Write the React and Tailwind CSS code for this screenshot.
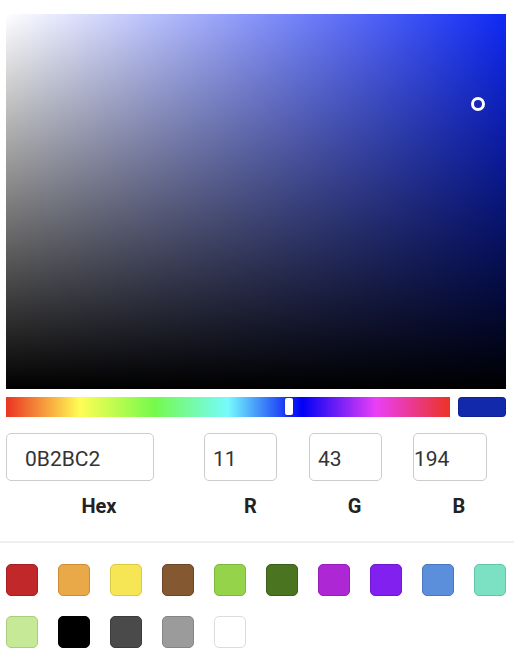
import React, { useState } from 'react';

const presetColors = [
  { fill: '#c0282a', edge: '#a51f22' },
  { fill: '#eaa948', edge: '#cf8e36' },
  { fill: '#f6e655', edge: '#dcca42' },
  { fill: '#845830', edge: '#6c4526' },
  { fill: '#94d34a', edge: '#7bb83b' },
  { fill: '#4b7420', edge: '#3b5f18' },
  { fill: '#ad27d4', edge: '#951eb9' },
  { fill: '#8220f0', edge: '#6e19d2' },
  { fill: '#5c8fdb', edge: '#4978c1' },
  { fill: '#7ce0c2', edge: '#63c6a8' },
  { fill: '#c5e996', edge: '#a9cd7c' },
  { fill: '#000000', edge: '#000000' },
  { fill: '#4a4a4a', edge: '#3b3b3b' },
  { fill: '#9b9b9b', edge: '#858585' },
  { fill: '#ffffff', edge: '#dcdcdc' },
];

function App() {
  const [color] = useState({ hex: '0B2BC2', r: 11, g: 43, b: 194 });

  return (
    <div className="w-[514px] min-h-[651px] bg-white font-['Roboto',sans-serif]">
      <div className="px-[6px] pt-[14px]">
        {/* Saturation / value area */}
        <div className="relative w-[500px] h-[375px] bg-[#0f29f5]">
          <div className="absolute inset-0 bg-[linear-gradient(to_right,#ffffff,rgba(255,255,255,0))]" />
          <div className="absolute inset-0 bg-[linear-gradient(to_top,#000000,rgba(0,0,0,0))]" />
          <div className="absolute left-[465px] top-[83px] w-[14px] h-[14px] rounded-full border-[3px] border-white shadow-[0_0_1px_rgba(0,0,0,0.4)]" />
        </div>

        {/* Hue slider + active colour */}
        <div className="flex gap-2 mt-2">
          <div className="relative w-[444px] h-5 bg-[linear-gradient(to_right,#eb3323_0%,#fffd54_16.67%,#75fa4c_33.33%,#75fbfd_50%,#0000f5_66.67%,#ea3ff7_83.33%,#eb3323_100%)]">
            <div className="absolute left-[279px] top-[1px] w-2 h-[17px] rounded-[2px] bg-white shadow-[0_0_2px_rgba(0,0,0,0.35)]" />
          </div>
          <div className="w-12 h-5 rounded-[4px] bg-[#1329ab] shadow-[inset_0_0_0_1px_rgba(0,0,0,0.15)]" />
        </div>

        {/* Fields */}
        <div className="flex mt-4 text-[21px] text-[#333]">
          <div className="w-[148px] h-12 flex items-center pt-[5px] pl-[18px] border-[1.5px] border-[#cccccc] rounded-[5px]">{color.hex}</div>
          <div className="ml-[50px] w-[73px] h-12 flex items-center pt-[5px] pl-2 border-[1.5px] border-[#cccccc] rounded-[5px]">{color.r}</div>
          <div className="ml-[32px] w-[73px] h-12 flex items-center pt-[5px] pl-2 border-[1.5px] border-[#cccccc] rounded-[5px]">{color.g}</div>
          <div className="ml-[31px] w-[74px] h-12 flex items-center pt-[5px] pl-0 border-[1.5px] border-[#cccccc] rounded-[5px]">{color.b}</div>
        </div>
        <div className="flex mt-[13px] text-[20px] font-bold text-[#222] leading-6">
          <div className="w-[148px] pl-[38px] text-center">Hex</div>
          <div className="ml-[50px] w-[73px] pl-[20px] text-center">R</div>
          <div className="ml-[32px] w-[73px] pl-[18px] text-center">G</div>
          <div className="ml-[31px] w-[74px] pl-[18px] text-center">B</div>
        </div>
      </div>

      <div className="mt-[23px] h-[2px] bg-[#efefef]" />

      {/* Preset swatches */}
      <div className="grid grid-cols-[repeat(10,32px)] gap-5 px-[6px] pt-[21px]">
        {presetColors.map((c, i) => (
          <div
            key={i}
            className="w-8 h-8 rounded-[5px] border-[1.5px]"
            style={{ backgroundColor: c.fill, borderColor: c.edge }}
          />
        ))}
      </div>
    </div>
  );
}

export default App;
